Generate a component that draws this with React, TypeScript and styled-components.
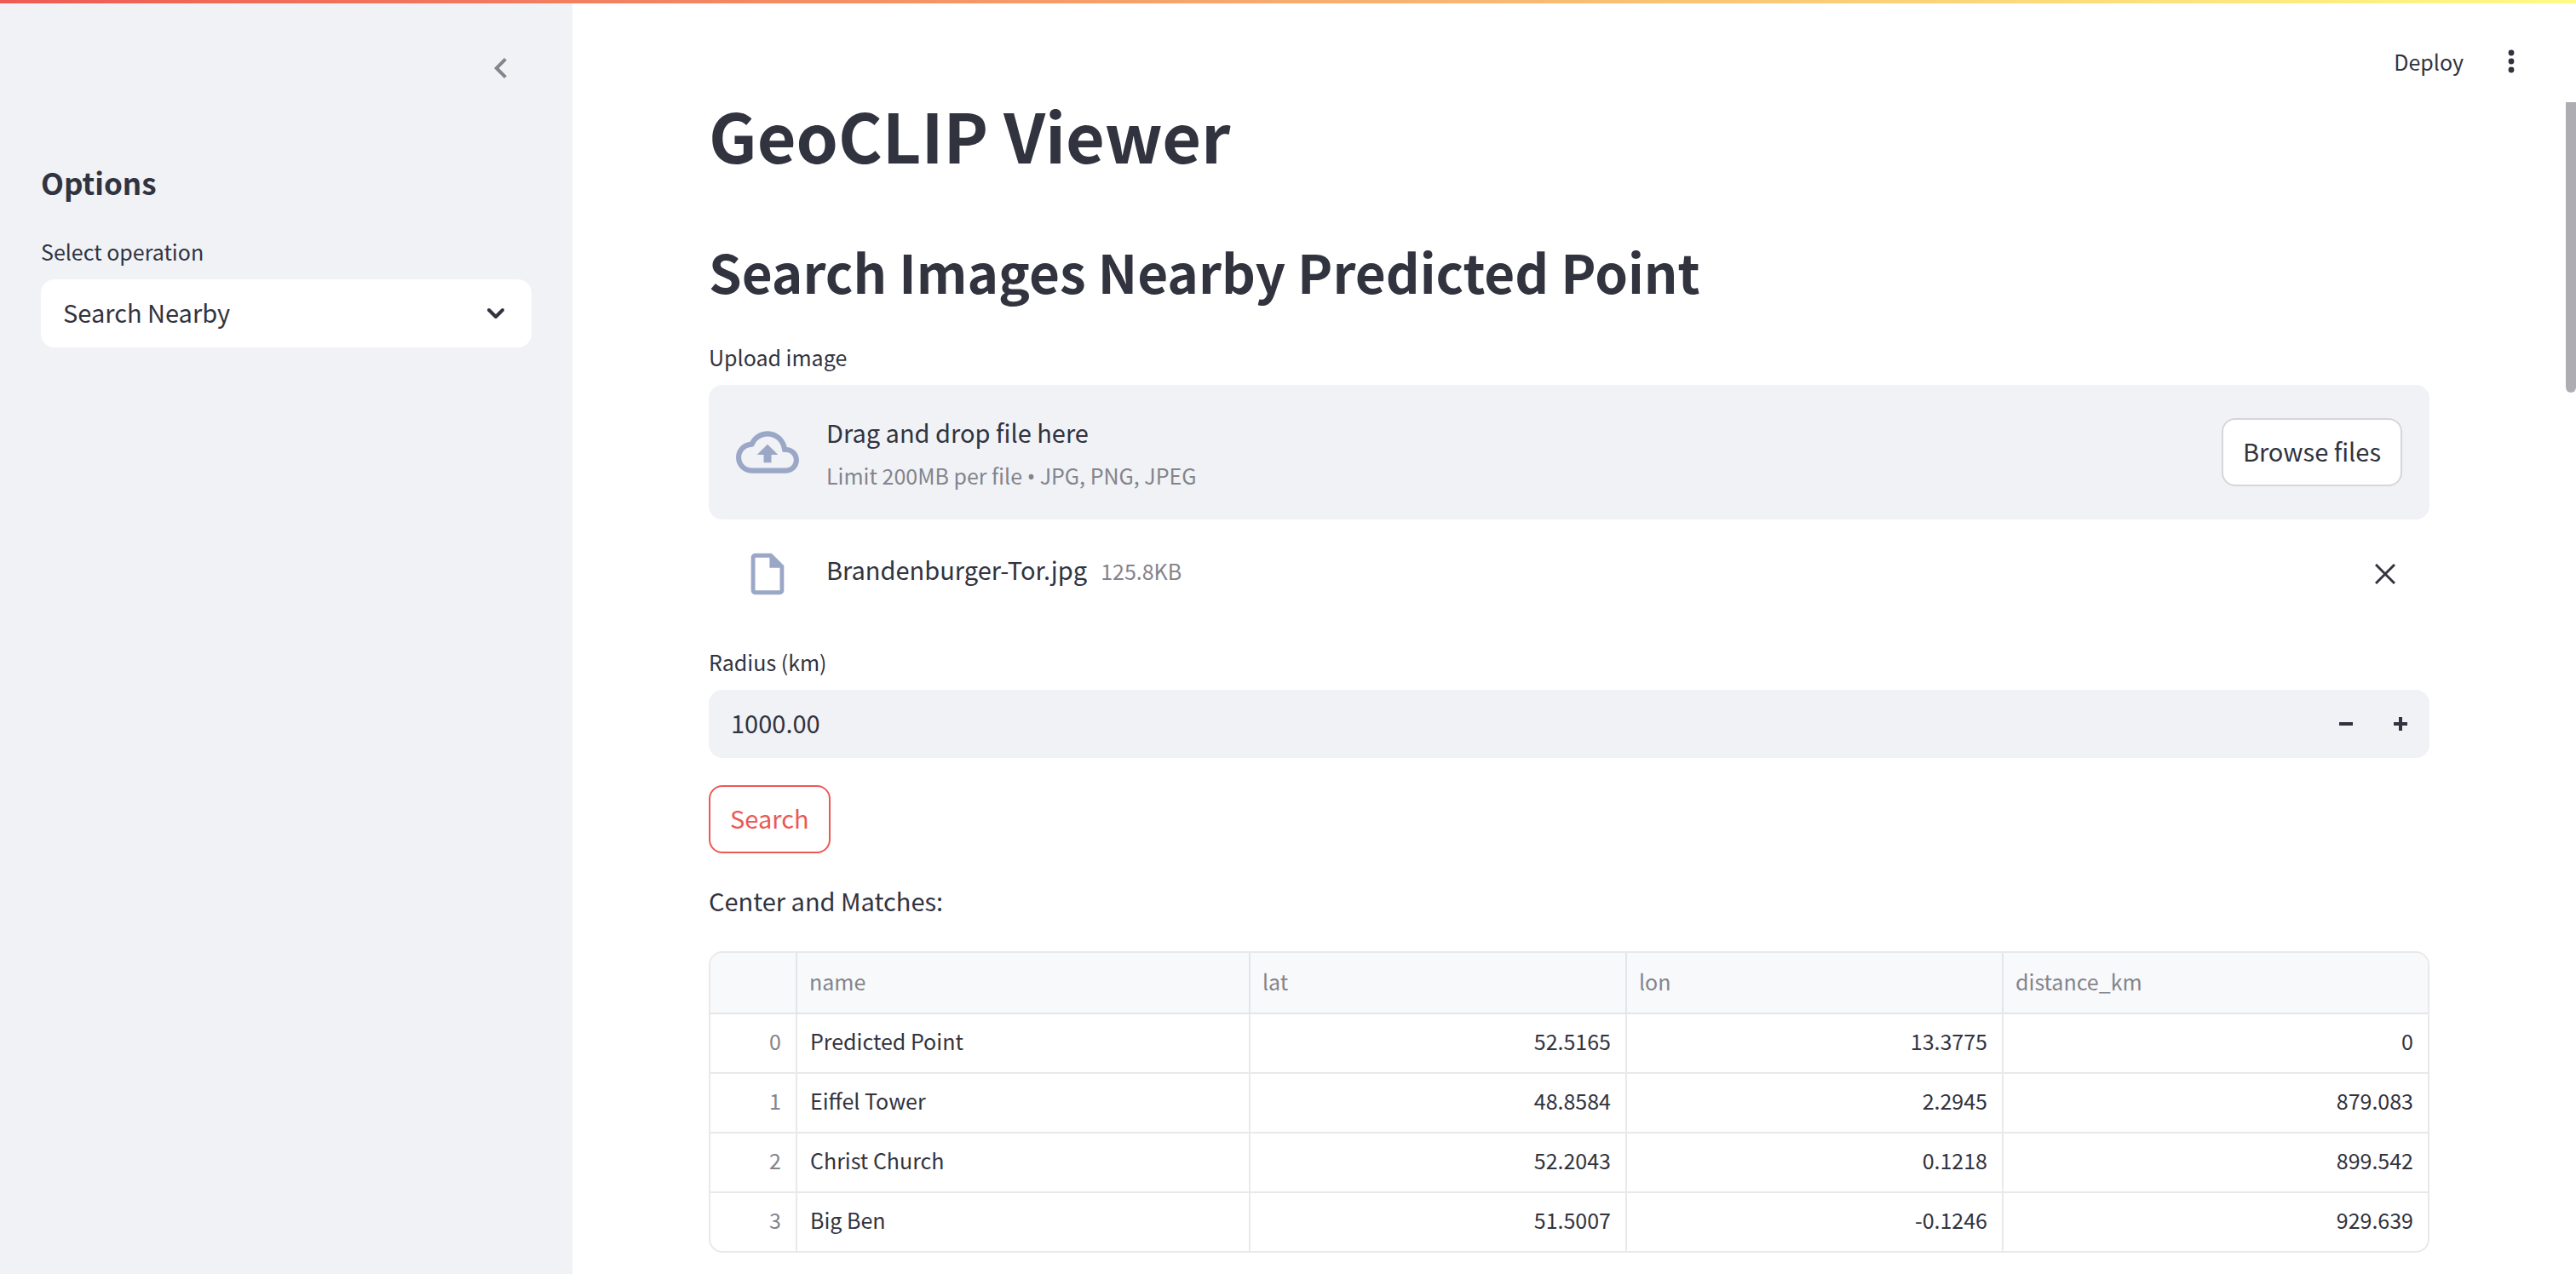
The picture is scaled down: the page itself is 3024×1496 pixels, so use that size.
import React from "react";
import styled, { createGlobalStyle } from "styled-components";

const ink = "#31333f";
const muted = "#83848c";
const surface = "#f0f2f6";
const accent = "#ec5953";
const line = "#e9e9eb";
const iconBlue = "#9ba7c6";

const GlobalStyle = createGlobalStyle`
  *, *::before, *::after { box-sizing: border-box; }
  body {
    margin: 0;
    background: #ffffff;
    color: ${ink};
    font-family: "Noto Sans CJK SC", "Source Sans Pro", "Noto Sans", sans-serif;
    font-size: 29px;
    line-height: 46px;
  }
  button, input, select { font: inherit; color: inherit; }
  h1, h2, p { margin: 0; }
  svg { display: block; }
`;

const Page = styled.div`
  display: flex;
  min-height: 100vh;
`;

const Decoration = styled.div`
  position: fixed;
  inset: 0 0 auto 0;
  height: 4px;
  background: linear-gradient(90deg, #ee5b55, #fffb86);
  z-index: 2;
`;

const ScrollThumb = styled.div`
  position: fixed;
  top: 120px;
  right: 0;
  width: 12px;
  height: 341px;
  border-radius: 0 0 6px 6px;
  background: #aeadb2;
`;

const Sidebar = styled.aside`
  flex: 0 0 672px;
  background: ${surface};
  padding: 56px 48px 48px;
`;

const SidebarHeader = styled.div`
  display: flex;
  justify-content: flex-end;
  padding: 0 12px 86px 0;
`;

const IconButton = styled.button<{ $width?: number; $tone?: string }>`
  display: flex;
  align-items: center;
  justify-content: center;
  width: ${(p) => p.$width ?? 48}px;
  height: 48px;
  padding: 0;
  border: 0;
  background: transparent;
  color: ${(p) => p.$tone ?? ink};
  cursor: pointer;
`;

const SidebarTitle = styled.h2`
  font-size: 35px;
  line-height: 48px;
  font-weight: 700;
  margin-bottom: 36px;
`;

const Label = styled.label`
  display: block;
  font-size: 25px;
  line-height: 42px;
  margin-bottom: 12px;
`;

const SelectBox = styled.div`
  position: relative;
  height: 80px;

  svg {
    position: absolute;
    top: 22px;
    right: 24px;
    pointer-events: none;
  }
`;

const Select = styled.select`
  appearance: none;
  width: 100%;
  height: 100%;
  padding: 0 64px 4px 26px;
  border: 0;
  border-radius: 16px;
  background: #ffffff;
`;

const Main = styled.main`
  flex: 1;
  min-width: 0;
`;

const Toolbar = styled.header`
  display: flex;
  justify-content: flex-end;
  align-items: center;
  gap: 32px;
  padding: 48px 52px 0 0;
`;

const DeployButton = styled.button`
  height: 48px;
  padding: 0;
  border: 0;
  background: transparent;
  font-size: 25px;
  line-height: 42px;
  cursor: pointer;
`;

const Content = styled.div`
  padding: 10px 172px 24px 160px;
`;

const Title = styled.h1`
  font-size: 79px;
  line-height: 104px;
  font-weight: 700;
  margin-bottom: 64px;
`;

const Subtitle = styled.h2`
  font-size: 62px;
  line-height: 88px;
  font-weight: 600;
  margin-bottom: 36px;
`;

const Dropzone = styled.section`
  display: flex;
  align-items: center;
  gap: 32px;
  padding: 32px;
  border-radius: 16px;
  background: ${surface};
`;

const IconSlot = styled.span`
  display: flex;
  justify-content: center;
  flex: 0 0 74px;
  color: ${iconBlue};
`;

const DropText = styled.div`
  display: flex;
  flex-direction: column;
  gap: 8px;
  flex: 1;
`;

const Small = styled.span`
  font-size: 25px;
  line-height: 40px;
  color: ${muted};
`;

const Bullet = styled.span`
  font-family: "Noto Sans", sans-serif;
  line-height: 1;
`;

const Button = styled.button<{ $primary?: boolean }>`
  height: 80px;
  padding: 0 23px 4px;
  border: 2px solid ${(p) => (p.$primary ? accent : "#d6d6d9")};
  border-radius: 16px;
  background: #ffffff;
  color: ${(p) => (p.$primary ? accent : ink)};
  cursor: pointer;
`;

const FileRow = styled.div`
  display: flex;
  align-items: center;
  gap: 32px;
  padding: 35px 32px 53px;
`;

const FileInfo = styled.div`
  display: flex;
  align-items: baseline;
  gap: 16px;
  flex: 1;
  padding-bottom: 12px;
`;

const NumberBox = styled.div`
  display: flex;
  align-items: center;
  height: 80px;
  padding: 0 2px;
  border-radius: 16px;
  background: ${surface};
  margin-bottom: 32px;
`;

const NumberInput = styled.input`
  flex: 1;
  min-width: 0;
  height: 100%;
  padding: 0 24px 4px;
  border: 0;
  background: transparent;
  appearance: textfield;

  &::-webkit-inner-spin-button,
  &::-webkit-outer-spin-button {
    appearance: none;
    margin: 0;
  }
`;

const Paragraph = styled.p`
  margin: 32px 0 37px;
`;

const TableFrame = styled.div`
  border: 2px solid ${line};
  border-radius: 16px;
  overflow: hidden;
`;

const Table = styled.table`
  width: 100%;
  table-layout: fixed;
  border-collapse: separate;
  border-spacing: 0;
  font-size: 25px;
  line-height: 40px;

  tbody tr:last-child > * {
    height: 68px;
    border-bottom: 0;
  }

  tr > *:last-child {
    border-right: 0;
  }
`;

const Col = styled.col<{ $width?: number }>`
  width: ${(p) => (p.$width ? `${p.$width}px` : "auto")};
`;

const HeadCell = styled.th`
  height: 72px;
  padding: 0 14px 4px;
  border-right: 2px solid #e4e5e9;
  border-bottom: 2px solid #e4e5e9;
  background: #f8f9fb;
  color: ${muted};
  font-weight: 400;
  text-align: left;
`;

const Cell = styled.td<{ $numeric?: boolean }>`
  height: 70px;
  padding: 0 17px 6px 15px;
  border-right: 2px solid ${line};
  border-bottom: 2px solid ${line};
  text-align: ${(p) => (p.$numeric ? "right" : "left")};
`;

const IndexCell = styled(Cell).attrs({ as: "th", scope: "row" })`
  color: ${muted};
  font-weight: 400;
`;

const rows = [
  ["Predicted Point", "52.5165", "13.3775", "0"],
  ["Eiffel Tower", "48.8584", "2.2945", "879.083"],
  ["Christ Church", "52.2043", "0.1218", "899.542"],
  ["Big Ben", "51.5007", "-0.1246", "929.639"],
];

export default function App() {
  return (
    <>
      <GlobalStyle />
      <Decoration />
      <Page>
        <Sidebar>
          <SidebarHeader>
            <IconButton type="button" aria-label="Collapse sidebar" $tone={muted}>
              <svg width="48" height="48" viewBox="0 0 24 24" fill="currentColor">
                <path d="M15.41 7.41 14 6l-6 6 6 6 1.41-1.41L10.83 12z" />
              </svg>
            </IconButton>
          </SidebarHeader>
          <SidebarTitle>Options</SidebarTitle>
          <Label htmlFor="operation">Select operation</Label>
          <SelectBox>
            <Select id="operation" defaultValue="nearby">
              <option value="nearby">Search Nearby</option>
            </Select>
            <svg width="36" height="36" viewBox="0 0 36 36" fill="none" stroke={ink} strokeWidth="4" strokeLinecap="round" strokeLinejoin="round">
              <path d="M10 14l8 8 8-8" />
            </svg>
          </SelectBox>
        </Sidebar>
        <Main>
          <Toolbar>
            <DeployButton type="button">Deploy</DeployButton>
            <IconButton type="button" aria-label="Main menu">
              <svg width="40" height="40" viewBox="0 0 40 40" fill="currentColor">
                <circle cx="20" cy="10" r="3.4" />
                <circle cx="20" cy="20" r="3.4" />
                <circle cx="20" cy="30" r="3.4" />
              </svg>
            </IconButton>
          </Toolbar>
          <Content>
            <Title>GeoCLIP Viewer</Title>
            <Subtitle>Search Images Nearby Predicted Point</Subtitle>
            <Label as="p">Upload image</Label>
            <Dropzone aria-label="Upload image">
              <IconSlot>
                <svg width="74" height="74" viewBox="0 0 24 24" fill="currentColor">
                  <path d="M19.35 10.04C18.67 6.59 15.64 4 12 4 9.11 4 6.6 5.64 5.35 8.04 2.34 8.36 0 10.91 0 14c0 3.31 2.69 6 6 6h13c2.76 0 5-2.24 5-5 0-2.64-2.05-4.78-4.65-4.96zM19 18H6c-2.21 0-4-1.79-4-4 0-2.05 1.53-3.76 3.56-3.97l1.07-.11.5-.95C8.08 7.14 9.94 6 12 6c2.62 0 4.88 1.86 5.39 4.43l.3 1.5 1.53.11c1.56.1 2.78 1.41 2.78 2.96 0 1.65-1.35 3-3 3zM8 13h2.55v3h2.9v-3H16l-4-4-4 4z" />
                </svg>
              </IconSlot>
              <DropText>
                <span>Drag and drop file here</span>
                <Small>
                  Limit 200MB per file <Bullet>•</Bullet> JPG, PNG, JPEG
                </Small>
              </DropText>
              <Button type="button">Browse files</Button>
            </Dropzone>
            <FileRow>
              <IconSlot>
                <svg width="58" height="58" viewBox="0 0 24 24" fill="currentColor">
                  <path d="M6 2h8l6 6v12c0 1.1-.9 2-2 2H6c-1.1 0-2-.9-2-2V4c0-1.1.9-2 2-2zm0 18h12V9h-5V4H6v16z" />
                </svg>
              </IconSlot>
              <FileInfo>
                <span>Brandenburger-Tor.jpg</span>
                <Small>125.8KB</Small>
              </FileInfo>
              <IconButton type="button" aria-label="Remove file" $width={40}>
                <svg width="24" height="24" viewBox="0 0 24 24" stroke="currentColor" strokeWidth="3">
                  <path d="M1 1l22 22M23 1L1 23" />
                </svg>
              </IconButton>
            </FileRow>
            <Label htmlFor="radius">Radius (km)</Label>
            <NumberBox>
              <NumberInput id="radius" type="number" step="0.01" defaultValue="1000.00" />
              <IconButton type="button" aria-label="Decrease" $width={64}>
                <svg width="16" height="16" viewBox="0 0 16 16" fill="currentColor">
                  <path d="M0 6h16v4H0z" />
                </svg>
              </IconButton>
              <IconButton type="button" aria-label="Increase" $width={64}>
                <svg width="16" height="16" viewBox="0 0 16 16" fill="currentColor">
                  <path d="M6 0h4v6h6v4h-6v6H6v-6H0V6h6z" />
                </svg>
              </IconButton>
            </NumberBox>
            <Button type="button" $primary>
              Search
            </Button>
            <Paragraph>Center and Matches:</Paragraph>
            <TableFrame>
              <Table>
                <colgroup>
                  <Col $width={102} />
                  <Col $width={532} />
                  <Col $width={442} />
                  <Col $width={442} />
                  <Col />
                </colgroup>
                <thead>
                  <tr>
                    <HeadCell as="td" />
                    <HeadCell scope="col">name</HeadCell>
                    <HeadCell scope="col">lat</HeadCell>
                    <HeadCell scope="col">lon</HeadCell>
                    <HeadCell scope="col">distance_km</HeadCell>
                  </tr>
                </thead>
                <tbody>
                  {rows.map(([name, ...values], index) => (
                    <tr key={name}>
                      <IndexCell $numeric>{index}</IndexCell>
                      <Cell>{name}</Cell>
                      {values.map((value, i) => (
                        <Cell key={i} $numeric>
                          {value}
                        </Cell>
                      ))}
                    </tr>
                  ))}
                </tbody>
              </Table>
            </TableFrame>
          </Content>
        </Main>
      </Page>
      <ScrollThumb />
    </>
  );
}
